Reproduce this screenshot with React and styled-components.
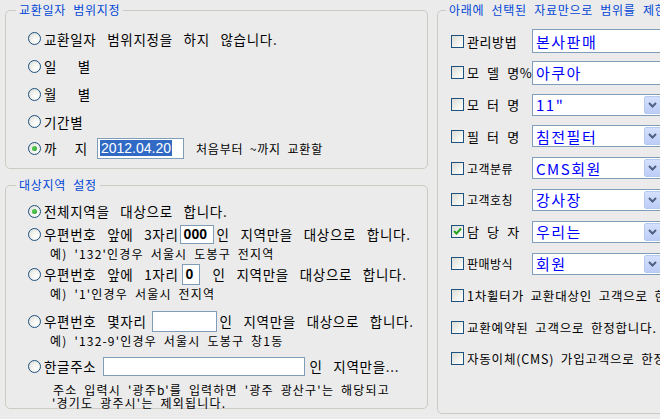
import React from 'react';
import styled, { createGlobalStyle } from 'styled-components';

const KR = '"Noto Sans CJK KR", "Liberation Sans", sans-serif';

const GlobalStyle = createGlobalStyle`
  html, body {
    margin: 0;
    padding: 0;
    background: #ebebeb;
  }
  body {
    font-family: ${KR};
    font-size: 13px;
    color: #000;
  }
`;

const Page = styled.div`
  width: 660px;
  height: 419px;
  overflow: hidden;
  box-sizing: border-box;
  padding: 2px 0 0 5px;
  display: flex;
  gap: 9px;
  align-items: flex-start;
`;

const Column = styled.div`
  flex: none;
  width: 423px;
  display: flex;
  flex-direction: column;
  gap: 8px;
`;

const Group = styled.fieldset`
  margin: 0;
  padding: 0;
  min-width: 0;
  box-sizing: border-box;
  height: ${p => p.$h}px;
  width: ${p => p.$w || 'auto'};
  flex: none;
  border: 1px solid #cbcbc3;
  border-radius: 5px;
`;

const Legend = styled.legend`
  margin-left: ${p => p.$ml || 10}px;
  padding: 0 3px;
  font-size: 12px;
  line-height: 16px;
  color: #0046d5;
  letter-spacing: 0.7px;
  word-spacing: 4px;
  white-space: nowrap;
`;

const Body = styled.div`
  display: flex;
  flex-direction: column;
  gap: ${p => p.$gap || 0}px;
  padding: ${p => p.$pad};
`;

const Row = styled.div`
  display: flex;
  align-items: center;
  height: ${p => p.$h || 22}px;
  margin-top: ${p => p.$mt || 0}px;
  white-space: nowrap;
`;

const RadioDot = styled.span`
  flex: none;
  width: 11px;
  height: 11px;
  border-radius: 50%;
  border: 1px solid #1c5180;
  background: radial-gradient(circle at 65% 65%, #ffffff 0%, #f4f4f0 40%, #d8d8d2 100%);
  display: flex;
  align-items: center;
  justify-content: center;
  margin-right: 3px;
  &::after {
    content: '';
    width: 5px;
    height: 5px;
    border-radius: 50%;
    background: ${p => (p.$on ? 'radial-gradient(circle at 40% 40%, #60d060, #1a9a1a)' : 'transparent')};
  }
`;

const Text = styled.span`
  font-size: ${p => p.$fs || 13.5}px;
  letter-spacing: ${p => (p.$ls !== undefined ? p.$ls : 0.7)}px;
  word-spacing: ${p => (p.$ws !== undefined ? p.$ws : 7)}px;
  margin-left: ${p => p.$ml || 0}px;
`;

const Note = styled.div`
  font-size: 12px;
  letter-spacing: 1.2px;
  word-spacing: 3px;
  padding-left: ${p => p.$indent || 22}px;
  margin-top: ${p => p.$mt || 0}px;
  line-height: ${p => p.$lh || 17}px;
  white-space: nowrap;
`;

const SmallBox = styled.span`
  flex: none;
  box-sizing: border-box;
  width: ${p => p.$w}px;
  height: ${p => p.$h || 19}px;
  border: 1px solid #7f9db9;
  background: #fff;
  display: flex;
  align-items: center;
  padding-left: 3px;
  font-family: "Liberation Sans", sans-serif;
  font-weight: bold;
  font-size: 14px;
  margin-left: ${p => p.$ml || 0}px;
`;

const DateBox = styled.span`
  flex: none;
  box-sizing: border-box;
  width: 87px;
  height: 21px;
  border: 1px solid #7f9db9;
  background: #fff;
  display: flex;
  align-items: center;
  padding-left: 2px;
  margin-left: 9px;
  margin-right: 12px;
`;

const Selected = styled.span`
  background: #316ac5;
  color: #fff;
  font-family: "Liberation Sans", sans-serif;
  font-size: 14px;
  line-height: 16px;
  padding: 0 1px;
`;

const CheckBox = styled.span`
  flex: none;
  box-sizing: border-box;
  width: 13px;
  height: 13px;
  border: 1px solid #1c5180;
  background: linear-gradient(135deg, #dcdcd5 0%, #f2f2ee 60%, #ffffff 100%);
  display: flex;
  align-items: center;
  justify-content: center;
  margin-right: 3px;
`;

const FieldLabel = styled.span`
  flex: none;
  width: 65px;
  font-size: ${p => (p.$small ? 12 : 13)}px;
  letter-spacing: ${p => (p.$small ? 0.5 : 0.6)}px;
  word-spacing: 4px;
`;

const Field = styled.span`
  flex: none;
  box-sizing: border-box;
  width: 131px;
  height: ${p => (p.$combo ? 22 : 24)}px;
  border: 1px solid #7f9db9;
  background: #fff;
  display: flex;
  align-items: center;
  padding: 0 1px 0 3px;
  color: #0000ff;
  font-size: 15px;
  letter-spacing: 1.5px;
`;

const FieldValue = styled.span`
  flex: 1;
  overflow: hidden;
`;

const DropButton = styled.span`
  flex: none;
  width: 17px;
  height: 18px;
  border-radius: 2px;
  background: linear-gradient(180deg, #d4e0fc 0%, #bccdf6 100%);
  border: 1px solid #b5c8f2;
  box-sizing: border-box;
  display: flex;
  align-items: center;
  justify-content: center;
`;

const Check = () => (
  <svg width="9" height="9" viewBox="0 0 9 9">
    <polyline points="1,4 3.5,6.5 8,1.5" fill="none" stroke="#21a121" strokeWidth="2" />
  </svg>
);

const Chevron = () => (
  <svg width="9" height="6" viewBox="0 0 9 6">
    <polyline points="1,1 4.5,4.5 8,1" fill="none" stroke="#4d6185" strokeWidth="2" />
  </svg>
);

const Radio = ({ on, children }) => (
  <>
    <RadioDot $on={on} />
    {children}
  </>
);

const FieldRow = ({ label, small, value, combo, checked }) => (
  <Row $h={24}>
    <CheckBox>{checked && <Check />}</CheckBox>
    <FieldLabel $small={small}>{label}</FieldLabel>
    <Field $combo={combo}>
      <FieldValue>{value}</FieldValue>
      {combo && (
        <DropButton>
          <Chevron />
        </DropButton>
      )}
    </Field>
  </Row>
);

const fields = [
  { label: '관리방법', value: '본사판매' },
  { label: '모 델 명%', value: '아쿠아' },
  { label: '모 터 명', value: '11"', combo: true },
  { label: '필 터 명', value: '침전필터', combo: true },
  { label: '고객분류', value: 'CMS회원', combo: true, small: true },
  { label: '고객호칭', value: '강사장', combo: true, small: true },
  { label: '담 당 자', value: '우리는', combo: true, checked: true },
  { label: '판매방식', value: '회원', combo: true, small: true },
];

const limits = [
  '1차휠터가 교환대상인 고객으로 한정합니다.',
  '교환예약된 고객으로 한정합니다.',
  '자동이체(CMS) 가입고객으로 한정합니다.',
];

export default function App() {
  return (
    <>
      <GlobalStyle />
      <Page>
        <Column>
          <Group $h={167}>
            <Legend>교환일자 범위지정</Legend>
            <Body $pad="7px 0 0 22px">
              <Row $h={27}>
                <Radio>
                  <Text>교환일자 범위지정을 하지 않습니다.</Text>
                </Radio>
              </Row>
              <Row $h={28}>
                <Radio>
                  <Text $ws={17}>일 별</Text>
                </Radio>
              </Row>
              <Row $h={28}>
                <Radio>
                  <Text $ws={17}>월 별</Text>
                </Radio>
              </Row>
              <Row $h={27}>
                <Radio>
                  <Text>기간별</Text>
                </Radio>
              </Row>
              <Row $h={26}>
                <Radio on>
                  <Text $ws={14}>까 지</Text>
                </Radio>
                <DateBox>
                  <Selected>2012.04.20</Selected>
                </DateBox>
                <Text $fs={12} $ls={0.8} $ws={3}>처음부터 ~까지 교환할</Text>
              </Row>
            </Body>
          </Group>

          <Group $h={232}>
            <Legend>대상지역 설정</Legend>
            <Body $pad="7px 0 0 22px">
              <Row>
                <Radio on>
                  <Text>전체지역을 대상으로 합니다.</Text>
                </Radio>
              </Row>
              <Row $mt={1}>
                <Radio>
                  <Text>우편번호 앞에 3자리</Text>
                </Radio>
                <SmallBox $w={34} $h={19} $ml={1}>000</SmallBox>
                <Text $ml={3}>인 지역만을 대상으로 합니다.</Text>
              </Row>
              <Note>예) '132'인경우 서울시 도봉구 전지역</Note>
              <Row $mt={1} $h={22}>
                <Radio>
                  <Text>우편번호 앞에 1자리</Text>
                </Radio>
                <SmallBox $w={18} $h={21} $ml={3}>0</SmallBox>
                <Text $ml={13}>인 지역만을 대상으로 합니다.</Text>
              </Row>
              <Note>예) '1'인경우 서울시 전지역</Note>
              <Row $mt={8} $h={22}>
                <Radio>
                  <Text>우편번호 몇자리</Text>
                </Radio>
                <SmallBox $w={65} $h={21} $ml={5} />
                <Text $ml={3}>인 지역만을 대상으로 합니다.</Text>
              </Row>
              <Note>예) '132-9'인경우 서울시 도봉구 창1동</Note>
              <Row $mt={6} $h={22}>
                <Radio>
                  <Text>한글주소</Text>
                </Radio>
                <SmallBox $w={202} $h={19} $ml={7} />
                <Text $ml={4}>인 지역만을...</Text>
              </Row>
              <Note $indent={25} $lh={13} $mt={6}>
                주소 입력시 '광주b'를 입력하면 '광주 광산구'는 해당되고
              </Note>
              <Note $indent={24} $lh={13}>'경기도 광주시'는 제외됩니다.</Note>
            </Body>
          </Group>
        </Column>

        <Group $h={412} $w="260px">
          <Legend $ml={8}>아래에 선택된 자료만으로 범위를 제한합니다</Legend>
          <Body $pad="11px 0 0 13px" $gap={7.8}>
            {fields.map(f => (
              <FieldRow key={f.label} {...f} />
            ))}
            {limits.map(t => (
              <Row key={t} $h={24}>
                <CheckBox />
                <Text $fs={12.5} $ls={0.8} $ws={3}>{t}</Text>
              </Row>
            ))}
          </Body>
        </Group>
      </Page>
    </>
  );
}
